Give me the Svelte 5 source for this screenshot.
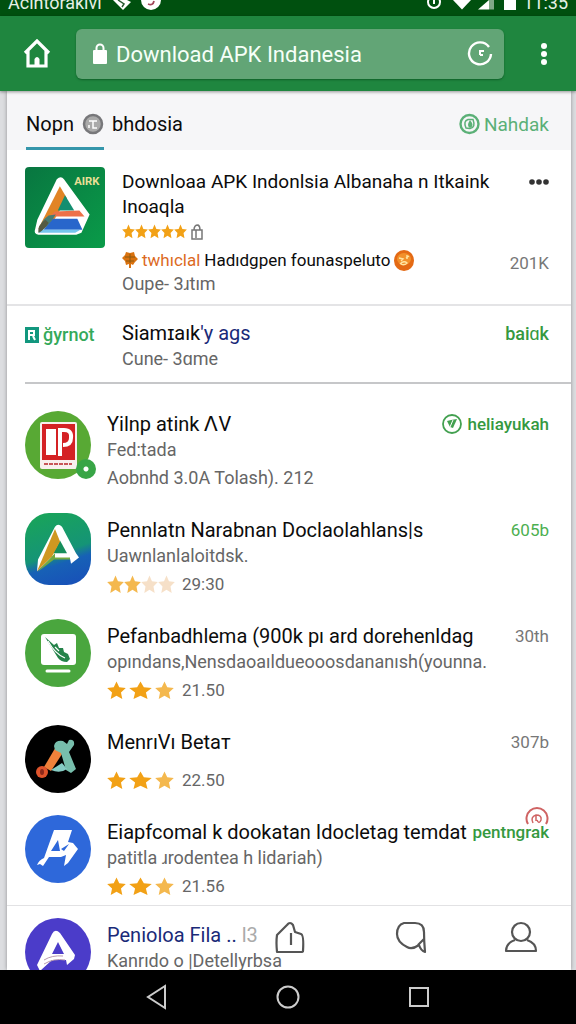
<script lang="ts">
  type Star = 'full' | 'soft' | 'pale';

  type App = {
    icon: string;
    title: string;
    lines: string[];
    stars?: Star[];
    count?: string;
    side: string;
    tone: 'grey' | 'green' | 'strong';
    badge?: 'compass' | 'spiral';
  };

  let address = 'Download APK Indanesia';

  const apps: App[] = [
    {
      icon: 'poster',
      title: 'Yilnp atink ꓥV',
      lines: ['Fed:tada', 'Aobnhd 3.0A Tolash). 212'],
      side: 'heliayukah',
      tone: 'strong',
      badge: 'compass'
    },
    {
      icon: 'letter',
      title: 'Pennlatn Narabnan Doclaolahlans|s',
      lines: ['Uawnlanlaloitdsk.'],
      stars: ['soft', 'soft', 'pale', 'pale'],
      count: '29:30',
      side: '605b',
      tone: 'green'
    },
    {
      icon: 'screen',
      title: 'Pefanbadhlema (900k pı ard dorehenldag',
      lines: ['opındans,Nensdaoaıldueooosdananısh(younna.'],
      stars: ['full', 'full', 'soft'],
      count: '21.50',
      side: '30th',
      tone: 'grey'
    },
    {
      icon: 'brush',
      title: 'MenrıVı Betaт',
      lines: [],
      stars: ['full', 'full', 'soft'],
      count: '22.50',
      side: '307b',
      tone: 'grey'
    },
    {
      icon: 'blue',
      title: 'Eiapfcomal k dookatan Idocletag temdat',
      lines: ['patitla ɹrodentea h lidariah)'],
      stars: ['full', 'full', 'soft'],
      count: '21.56',
      side: 'pentngrak',
      tone: 'strong',
      badge: 'spiral'
    }
  ];
</script>

{#snippet star(kind: Star)}
  <svg class="star {kind}" viewBox="0 0 20 20" preserveAspectRatio="none" aria-hidden="true">
    <path d="M10 0.5l2.9 6.1 6.9.8-5.1 4.7 1.4 6.8L10 15.500l-6.100 3.400 1.400-6.800L.2 7.400l6.900-.8z" />
  </svg>
{/snippet}

<div class="phone">
  <div class="status">
    <span>Acihtorakivi</span>
    <svg class="alerts" viewBox="0 0 52 16" aria-hidden="true">
      <path d="M1 0h14l4 2-8 8z" fill="#fff" />
      <path d="M6 0l6 4-2 3" fill="none" stroke="#285b31" stroke-width="1.5" />
      <circle cx="39" cy="0" r="10" fill="#fff" />
      <path d="M36 4q5 2 6-3" fill="none" stroke="#a2465a" stroke-width="1.8" />
    </svg>
    <svg class="signals" viewBox="0 0 94 16" aria-hidden="true">
      <circle cx="9" cy="2" r="6" fill="none" stroke="#fff" stroke-width="2" />
      <path d="M9 0v4" stroke="#fff" stroke-width="2" />
      <path d="M28 0h18l-9 9.500z" fill="#fff" />
      <path d="M53 9.500L64 0v9.500z" fill="#fff" />
      <path d="M64 0h5v9.500h-5z" fill="#7fa886" />
      <path d="M79 0h12v10H79z" fill="#fff" />
    </svg>
    <span class="time">11:35</span>
  </div>

  <header class="toolbar">
    <button class="plain" aria-label="Home">
      <svg width="28" height="30" viewBox="0 0 28 30">
        <path d="M2 14L14 2l12 12M5 12v15h18V12" fill="none" stroke="#fff" stroke-width="3.200" />
        <path d="M11.500 27v-7q2.500-4 5 0v7z" fill="#fff" />
      </svg>
    </button>
    <div class="address">
      <svg width="16" height="22" viewBox="0 0 16 22" aria-hidden="true">
        <rect x="1" y="7" width="14" height="14" rx="1" fill="#fff" />
        <path d="M4.500 8V5a3.500 3.500 0 0 1 7 0v3" fill="none" stroke="#fff" stroke-width="2" />
      </svg>
      <input type="text" aria-label="Address" bind:value={address} />
      <button class="plain" aria-label="Reload">
        <svg width="26" height="26" viewBox="0 0 26 26">
          <path d="M22 6a11 11 0 1 0 2 7" fill="none" stroke="#fff" stroke-width="2.400" />
          <path d="M13 14V9m0 1h4m-4 4l3 0" fill="none" stroke="#fff" stroke-width="2" />
        </svg>
      </button>
    </div>
    <button class="plain more" aria-label="Menu">
      <svg width="8" height="26" viewBox="0 0 8 26" fill="#fff">
        <circle cx="4" cy="5" r="3" />
        <circle cx="4" cy="13" r="3" />
        <circle cx="4" cy="21" r="3" />
      </svg>
    </button>
  </header>

  <main class="sheet">
    <nav class="tabs">
      <a class="tab" href="#home">
        Nopn
        <svg width="22" height="22" viewBox="0 0 22 22" aria-hidden="true">
          <circle cx="11" cy="11" r="9" fill="#aaa" stroke="#77777a" stroke-width="2.500" />
          <path d="M7 8h8M11 8v7h4M7 12v3" fill="none" stroke="#fff" stroke-width="1.500" />
        </svg>
        bhdosia
      </a>
      <a class="side-link" href="#nahdak">
        <svg width="21" height="22" viewBox="0 0 21 22" aria-hidden="true">
          <circle cx="10.500" cy="11" r="9" fill="none" stroke="#5bb077" stroke-width="2.400" />
          <path d="M7 15Q4 8 9 6.500h5q3 8-3 9z" fill="none" stroke="#5bb077" stroke-width="1.500" />
          <path d="M11 7q5 6 0 8-4-2 0-8z" fill="#5bb077" />
        </svg>
        Nahdak
      </a>
    </nav>

    <article class="featured">
      <svg class="cover" viewBox="0 0 78 80" preserveAspectRatio="none" aria-hidden="true">
        <defs>
          <linearGradient id="cover-bg" x1="0" y1="0" x2="1" y2="1">
            <stop offset="0" stop-color="#087640" />
            <stop offset="1" stop-color="#0a9b49" />
          </linearGradient>
        </defs>
        <rect width="78" height="80" rx="4" fill="url(#cover-bg)" />
        <path d="M31 12q4-4 7 0l25 35-8 18-5 2H13q-5-1-3-6l2-9z" fill="#fff" />
        <path d="M34 19l7 12-16 27-12 3z" fill="#e18425" />
        <path d="M39 28l9 15H32z" fill="#138e70" />
        <path d="M29 44l24-1 5 6H24z" fill="#ed7149" />
        <path d="M27 51h24l5 11H18z" fill="#2866cb" />
        <path d="M17 62h37l-5 3H13z" fill="#76c6ed" />
        <path d="M30 47q-5 9-16 18-1-10 9-17z" fill="#477c73" />
        <path d="M20 52q-8 5-7 13 7-4 10-10z" fill="#555a42" />
        <text x="48" y="18">AIRK</text>
      </svg>
      <div class="body">
        <h1>Downloaa APK Indonlsia Albanaha n Itkaink Inoaqla</h1>
        <div class="rating" role="img" aria-label="5 stars">
          {#each [1, 2, 3, 4, 5] as n (n)}{@render star('full')}{/each}
          <svg class="bag" width="14" height="16" viewBox="0 0 14 16">
            <path d="M2 6h10v9H2zM4 6q0-5 4-5 2 1 2 5M6 6v8" fill="none" stroke="#777" stroke-width="1.500" />
          </svg>
        </div>
        <p class="promo">
          <svg width="16" height="18" viewBox="0 0 16 18" aria-hidden="true">
            <path d="M4 1l4 1 4-1 1 4 3 3-3 3-2 3-2-1v4H7v-4l-3 1-1-4-3-3 3-3z" fill="#d9720f" />
            <path d="M3 6h10M4 10h8M8 3v9" stroke="#8c5a10" stroke-width="1" />
          </svg>
          <a href="#promo">twhıclal</a>
          <span>Hadıdgpen founaspeluto</span>
          <svg width="20" height="21" viewBox="0 0 20 21" aria-hidden="true">
            <ellipse cx="10" cy="10.500" rx="10" ry="10.500" fill="#e46a14" />
            <ellipse cx="10" cy="9" rx="7" ry="6" fill="#f2912b" />
            <path d="M5 8l4 1-2 2M12 8l3-2M13 5v4M6 14q4-4 7-1-3 3-6 1" fill="none" stroke="#ffe5a3" stroke-width="1.400" />
          </svg>
        </p>
        <p class="sub">Oupe- 3ɹtım</p>
      </div>
      <div class="aside">
        <button class="plain" aria-label="More options">
          <svg width="20" height="8" viewBox="0 0 20 8" fill="#333">
            <circle cx="3" cy="4" r="2.800" />
            <circle cx="10" cy="4" r="2.800" />
            <circle cx="17" cy="4" r="2.800" />
          </svg>
        </button>
        <span class="grey">201K</span>
      </div>
    </article>

    <article class="sponsor">
      <div class="brand">
        <svg width="14" height="16" viewBox="0 0 14 16" aria-hidden="true">
          <rect width="14" height="16" fill="#12977e" />
          <path d="M4 13V4h5v4H4m4 1l2 4" fill="none" stroke="#fff" stroke-width="2" />
        </svg>
        <span>ğyrnot</span>
      </div>
      <div class="body">
        <h2>Siamɪaık<span class="navy">'y ags</span></h2>
        <p class="sub">Cune- 3ɑme</p>
      </div>
      <a class="strong" href="#baik">baiɑk</a>
    </article>

    <ul class="apps">
      {#each apps as app (app.icon)}
        <li class="app" class:short={app.lines.length === 0}>
          <svg class="icon {app.icon}" viewBox="0 0 66 68" preserveAspectRatio="none" aria-hidden="true">
            {#if app.icon === 'poster'}
              <ellipse cx="33" cy="34" rx="33" ry="34" fill="#58a934" />
              <rect x="15" y="11" width="37" height="47" rx="2" fill="#f8efed" />
              <rect x="17" y="13" width="33" height="36" fill="#d42124" />
              <path d="M21 18h10v26H21z" fill="#fff" />
              <path d="M35 45V19h4q8 0 7 8 0 7-8 7" fill="none" stroke="#fff" stroke-width="4" />
              <path d="M19 53h28" stroke="#c85557" stroke-width="2" stroke-dasharray="4 1" />
            {:else if app.icon === 'letter'}
              <defs>
                <linearGradient id="letter-bg" x1="0.350" y1="0" x2="0.650" y2="1">
                  <stop offset="0" stop-color="#19a35b" />
                  <stop offset="0.550" stop-color="#159476" />
                  <stop offset="0.700" stop-color="#1761b6" />
                  <stop offset="1" stop-color="#1852b8" />
                </linearGradient>
              </defs>
              <rect width="66" height="68" rx="24" fill="url(#letter-bg)" />
              <path d="M13 44l17-31q3-4 7 0l14 25 3 4-8 6-1-5H26l-14 12z" fill="#fff" />
              <path d="M35 26l-7 12h14z" fill="#168e5b" />
              <path d="M30 15l5 12-8 14-15 14z" fill="#cf9821" />
              <path d="M30 38L12 56l17-12h16v-2H30z" fill="#72a940" />
            {:else if app.icon === 'screen'}
              <ellipse cx="33" cy="34" rx="33" ry="34" fill="#4aa63e" />
              <rect x="16" y="15" width="35" height="31" rx="3" fill="#fff" />
              <path d="M20 18l9 8 3-2 2 5 4 0 1 4 4 2 2 5-3 3q-6 0-9-4z" fill="#24834a" />
              <path d="M23 22q7 13 17 17M30 28l4 4" fill="none" stroke="#fff" stroke-width="1.200" />
              <path d="M22 52h22" stroke="#fff" stroke-width="3" stroke-linecap="round" />
            {:else if app.icon === 'brush'}
              <ellipse cx="33" cy="34" rx="33" ry="34" fill="#000" />
              <path d="M32 20l7 6-13 20-7-4z" fill="#ef813a" />
              <ellipse cx="17" cy="47" rx="6" ry="6" fill="#df542c" />
              <ellipse cx="17" cy="47" rx="2" ry="3" fill="#8b281a" />
              <path d="M29 21q1-6 9-5l4 3 2-4q6-1 5 5l-5 7 7 17-5 4-5-3-5-17-6-3z" fill="#77beac" />
              <path d="M37 38l5 6q-7 5-16 1z" fill="#85ccc4" />
            {:else}
              <ellipse cx="33" cy="34" rx="33" ry="34" fill="#2e68da" />
              <path d="M29 15h18l-4 12 5 1 5 6-10 14-4 3 2-11-5 2H24l-6 9-3-2-3 1q2-5 7-7zM33 25l-7 11h9zM39 36l5-7-8 5z" fill="#fff" fill-rule="evenodd" />
            {/if}
          </svg>
          {#if app.icon === 'poster'}
            <span class="dot"></span>
          {/if}
          <div class="body">
            <h2>{app.title}</h2>
            {#each app.lines as line (line)}
              <p class="sub">{line}</p>
            {/each}
            {#if app.stars}
              <div class="score">
                <span class="stars" class:wide={app.stars.length === 3}>
                  {#each app.stars as kind}{@render star(kind)}{/each}
                </span>
                {app.count}
              </div>
            {/if}
          </div>
          <a class="side {app.tone}" href="#{app.icon}">
            {#if app.badge === 'compass'}
              <svg width="20" height="20" viewBox="0 0 20 20" aria-hidden="true">
                <circle cx="10" cy="10" r="9" fill="none" stroke="#43a050" stroke-width="1.800" />
                <path d="M5 7l4-1 6-1-4 9-3-1z" fill="#43a050" />
                <path d="M8 13l3-7" stroke="#fff" stroke-width="1" />
              </svg>
            {:else if app.badge === 'spiral'}
              <svg class="spiral" width="24" height="18" viewBox="0 0 24 18" aria-hidden="true">
                <path d="M3 17A10.500 10.500 0 1 1 21 17" fill="none" stroke="#cf6363" stroke-width="2" />
                <path d="M8 16q-3-6 3-8 6 0 5 5-2 5-4 0M11 9v5" fill="none" stroke="#cf6363" stroke-width="1.500" />
              </svg>
            {/if}
            {app.side}
          </a>
        </li>
      {/each}
    </ul>

    <footer class="dock">
      <svg class="icon" viewBox="0 0 66 68" preserveAspectRatio="none" aria-hidden="true">
        <ellipse cx="33" cy="34" rx="33" ry="34" fill="#4b3cc9" />
        <path d="M12 47l15-31q3-6 8-1l15 22-1 4-7 6-1-5H27L15 53zM33 24l-6 12h12z" fill="#fff" fill-rule="evenodd" />
        <path d="M19 42q8-5 19-4M19 46q10-6 21-4" fill="none" stroke="#b99bb0" stroke-width="1" />
      </svg>
      <div class="body">
        <h2 class="navy">Penioloa Fila .. <span class="faint">l3</span></h2>
        <p class="sub">Kanrıdo o |Detellyrbsa</p>
      </div>
      <nav>
        <button class="plain" aria-label="Start">
          <svg width="34" height="34" viewBox="0 0 34 34">
            <path d="M4 31q-1-10 0-17L14 4q3-4 6 0l2 7 6 2q3 1 2 17 0 1-2 1zM18 12v12" />
          </svg>
        </button>
        <button class="plain" aria-label="Messages">
          <svg width="44" height="34" viewBox="0 0 44 34">
            <path d="M20 2h11q9 0 9 9 0 9 1 20-4-1-6-7-7 5-12 2-10-5-10-13 0-9 7-11zM34 24l6-6" />
          </svg>
        </button>
        <button class="plain" aria-label="Account">
          <svg width="34" height="34" viewBox="0 0 34 34">
            <ellipse cx="17" cy="11" rx="9" ry="9" />
            <path d="M11 19Q2 22 2 30h30q0-8-9-11" />
          </svg>
        </button>
      </nav>
    </footer>
  </main>

  <div class="system">
    <button class="plain" aria-label="Back">
      <svg width="22" height="26" viewBox="0 0 22 26"><path d="M19 2v22L2 13z" /></svg>
    </button>
    <button class="plain" aria-label="Home screen">
      <svg width="24" height="24" viewBox="0 0 24 24"><circle cx="12" cy="12" r="10.500" /></svg>
    </button>
    <button class="plain" aria-label="Recent apps">
      <svg width="22" height="22" viewBox="0 0 22 22"><rect x="2" y="2" width="18" height="18" /></svg>
    </button>
  </div>
</div>

<style>
  :global(body) {
    background: #dcdde0;
  }

  .phone {
    min-height: 100vh;
    display: flex;
    flex-direction: column;
    font-family: Roboto, 'Liberation Sans', sans-serif;
    color: #0c0c0c;
  }

  h1,
  h2,
  p,
  ul {
    margin: 0;
    padding: 0;
    font-weight: 400;
  }

  h1 {
    font-size: 19px;
    line-height: 25px;
  }

  h2 {
    font-size: 20px;
  }

  h2,
  .sub {
    line-height: 26px;
    white-space: nowrap;
  }

  a {
    color: inherit;
    text-decoration: none;
  }

  svg {
    display: block;
    flex: none;
  }

  .plain {
    display: block;
    padding: 0;
    border: 0;
    background: none;
    cursor: pointer;
  }

  /* scrolled partly off the top edge */
  .status {
    height: 16px;
    box-sizing: border-box;
    padding: 0 8px;
    display: flex;
    align-items: flex-end;
    overflow: hidden;
    background: #00500f;
    color: #e6f0e6;
    font-size: 18px;
    line-height: 26px;
  }

  .alerts {
    width: 52px;
    height: 16px;
    margin-left: 10px;
  }

  .signals {
    width: 94px;
    height: 16px;
    margin-left: auto;
    margin-right: 4px;
  }

  .toolbar {
    height: 75px;
    box-sizing: border-box;
    padding: 0 28px 0 23px;
    display: flex;
    align-items: center;
    background: #1f863f;
    box-shadow: 0 1px 3px rgba(0, 0, 0, 0.4);
    z-index: 1;
  }

  .address {
    flex: 1;
    min-width: 0;
    height: 50px;
    box-sizing: border-box;
    margin: 0 36px 0 25px;
    padding: 0 11px 0 16px;
    display: flex;
    align-items: center;
    gap: 8px;
    border-radius: 6px;
    background: #62a576;
    box-shadow: 0 1px 2px rgba(0, 60, 20, 0.5);
  }

  .address input {
    flex: 1;
    min-width: 0;
    padding: 2px 0 0;
    border: 0;
    outline: 0;
    background: none;
    color: #f6fff8;
    font: inherit;
    font-size: 22px;
  }

  .sheet {
    flex: 1;
    display: flex;
    flex-direction: column;
    margin: 0 5px 0 7px;
    background: #fff;
    box-shadow: 0 0 4px rgba(0, 0, 0, 0.35);
  }

  .tabs {
    display: flex;
    justify-content: space-between;
    height: 59px;
    padding: 0 22px 0 19px;
    background: #f6f6f8;
    font-size: 20px;
  }

  .tab,
  .side-link {
    display: flex;
    align-items: center;
    gap: 8px;
    padding-top: 7px;
  }

  .tab {
    position: relative;
  }

  .tab::after {
    content: '';
    position: absolute;
    left: 0;
    bottom: 0;
    width: 50%;
    height: 3px;
    background: #3596ab;
  }

  .side-link {
    gap: 4px;
    color: #5bb077;
    font-size: 19px;
  }

  .featured {
    display: flex;
    padding: 17px 22px 7px 18px;
    border-bottom: 2px solid #e4e4e6;
  }

  .cover {
    width: 80px;
    height: 81px;
    margin-right: 17px;
  }

  .cover text {
    font-size: 11px;
    font-weight: 700;
    fill: #e9df96;
  }

  .body {
    flex: 1;
    min-width: 0;
  }

  .featured .body {
    padding-top: 2px;
  }

  .rating {
    display: flex;
    align-items: center;
    height: 25px;
  }

  .rating .star {
    width: 13px;
    height: 15px;
  }

  .bag {
    margin-left: 3px;
  }

  .star {
    width: 17px;
    height: 19px;
  }

  .full {
    fill: #f2a116;
  }

  .soft {
    fill: #f4b84e;
  }

  .pale {
    fill: #f6e0c8;
  }

  .promo {
    display: flex;
    align-items: center;
    gap: 4px;
    height: 32px;
    font-size: 17px;
    white-space: nowrap;
  }

  .promo a {
    color: #dc6a1f;
  }

  .featured .sub {
    line-height: 16px;
    padding-bottom: 5px;
  }

  .sub {
    font-size: 18px;
    color: #666;
  }

  .aside {
    display: flex;
    flex-direction: column;
    align-items: flex-end;
    justify-content: space-between;
    padding: 11px 0 24px;
    font-size: 17px;
  }

  .grey {
    color: #777;
  }

  .green {
    color: #4caf50;
  }

  .strong {
    color: #35993f;
    font-weight: 500;
  }

  .navy {
    color: #1a2a78;
  }

  .sponsor {
    display: flex;
    margin-left: 18px;
    padding: 14px 22px 10px 0;
    border-bottom: 2px solid #c6c7c9;
    font-size: 18px;
    line-height: 28px;
  }

  .brand {
    display: flex;
    align-items: center;
    gap: 4px;
    width: 97px;
    height: 30px;
    color: #35a95a;
    font-weight: 500;
  }

  .apps {
    list-style: none;
    padding-top: 23px;
  }

  .app {
    position: relative;
    display: flex;
    padding: 0 22px 22px 18px;
  }

  .app:last-child {
    padding-bottom: 6px;
  }

  .icon {
    width: 66px;
    height: 68px;
    margin-right: 16px;
  }

  .poster {
    margin-top: 4px;
  }

  .letter {
    height: 72px;
  }

  .dot {
    position: absolute;
    left: 69px;
    top: 52px;
    width: 20px;
    height: 20px;
    border-radius: 50%;
    background: radial-gradient(#fff 0 2px, #38a546 3px);
  }

  .app .body {
    padding-top: 4px;
  }

  .app .sub + .sub {
    margin-top: 2px;
  }

  .score {
    display: flex;
    align-items: center;
    height: 26px;
    margin-top: 2px;
    color: #666;
    font-size: 17px;
  }

  .short .score {
    margin-top: 12px;
  }

  .stars {
    display: flex;
    justify-content: space-between;
    width: 67px;
    margin-right: 8px;
  }

  .wide .star {
    width: 19px;
  }

  .wide .star:nth-child(2) {
    width: 23px;
  }

  .side {
    position: relative;
    display: flex;
    align-items: center;
    gap: 5px;
    height: 26px;
    padding-top: 4px;
    font-size: 17px;
  }

  .spiral {
    position: absolute;
    right: 0;
    top: -8px;
  }

  .dock {
    display: flex;
    height: 64px;
    overflow: hidden;
    padding: 0 33px 0 18px;
    border-top: 1px solid #e2e2e4;
  }

  .dock .icon {
    margin-top: 12px;
  }

  .dock .body {
    flex: none;
    width: 166px;
    padding-top: 16px;
  }

  .faint {
    color: #aaa;
  }

  .dock nav {
    flex: 1;
    display: flex;
    justify-content: space-between;
    align-items: center;
  }

  .dock nav svg {
    fill: none;
    stroke: #555;
    stroke-width: 2.2;
    stroke-linejoin: round;
  }

  .system {
    display: flex;
    justify-content: center;
    align-items: center;
    gap: 108px;
    height: 54px;
    background: #000;
    position: relative;
  }

  .system svg {
    fill: none;
    stroke: #ccc;
    stroke-width: 2;
  }
</style>
